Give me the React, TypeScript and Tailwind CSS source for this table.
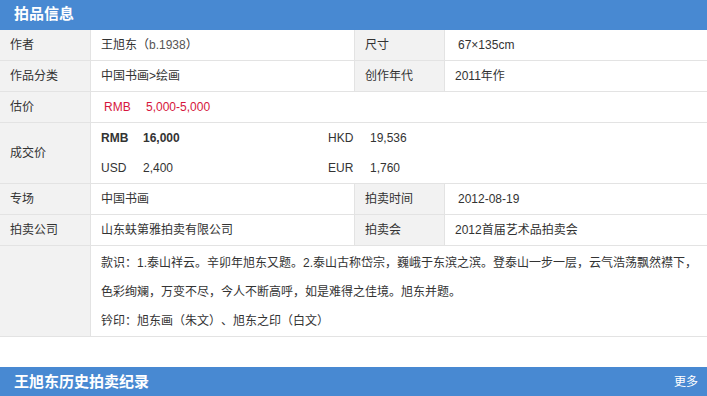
const font = { fontFamily: '"Liberation Sans", "Noto Sans CJK SC", sans-serif' };

function Label({ children, wide }: { children?: React.ReactNode; wide?: boolean }) {
  return (
    <div className={`${wide ? 'w-[91px]' : 'w-[90px]'} shrink-0 bg-[#f2f2f2] border-r border-[#e3e3e3] pl-[10px] flex items-center`}>
      {children}
    </div>
  );
}

function PairRow({ l1, v1, l2, v2 }: { l1: string; v1: React.ReactNode; l2: string; v2: React.ReactNode }) {
  return (
    <div className="flex h-[31px] border-b border-[#e3e3e3]">
      <Label wide>{l1}</Label>
      <div className="w-[264px] shrink-0 border-r border-[#e3e3e3] pl-[10px] flex items-center">{v1}</div>
      <Label>{l2}</Label>
      <div className="flex-1 pl-[10px] flex items-center">{v2}</div>
    </div>
  );
}

function Price({ cur, val, bold }: { cur: string; val: string; bold?: boolean }) {
  return (
    <div className={`flex items-center h-[30px] ${bold ? 'font-bold' : ''}`}>
      <span className="w-[42px]">{cur}</span>
      <span>{val}</span>
    </div>
  );
}

export default function App() {
  return (
    <div className="w-[707px] h-[396px] overflow-hidden bg-white text-[12px] text-[#333] [text-spacing-trim:space-all]" style={font}>
      {/* 拍品信息 */}
      <div className="h-[30px] bg-[#4889d2] flex items-center pl-[14px] pb-[2px] text-white text-[15px] font-bold">拍品信息</div>

      <PairRow
        l1="作者"
        v1={<span>王旭东（<span className="text-[#555]">b.1938</span>）</span>}
        l2="尺寸"
        v2={<span className="pl-[3px]">67×135cm</span>}
      />
      <PairRow l1="作品分类" v1="中国书画>绘画" l2="创作年代" v2="2011年作" />

      <div className="flex h-[31px] border-b border-[#e3e3e3]">
        <Label wide>估价</Label>
        <div className="flex-1 pl-[13px] flex items-center text-[#d6163c]">
          <span className="w-[42px]">RMB</span>
          <span>5,000-5,000</span>
        </div>
      </div>

      <div className="flex h-[61px] border-b border-[#e3e3e3]">
        <Label wide>成交价</Label>
        <div className="flex-1 pl-[10px] grid grid-cols-[227px_1fr]">
          <Price cur="RMB" val="16,000" bold />
          <Price cur="HKD" val="19,536" />
          <Price cur="USD" val="2,400" />
          <Price cur="EUR" val="1,760" />
        </div>
      </div>

      <PairRow l1="专场" v1="中国书画" l2="拍卖时间" v2={<span className="pl-[3px]">2012-08-19</span>} />
      <PairRow l1="拍卖公司" v1="山东蚨第雅拍卖有限公司" l2="拍卖会" v2="2012首届艺术品拍卖会" />

      <div className="flex h-[91px] border-b border-[#e3e3e3]">
        <Label wide />
        <div className="flex-1 pl-[10px] pt-[3px] leading-[29px] whitespace-nowrap">
          <div>款识：1.泰山祥云。辛卯年旭东又题。2.泰山古称岱宗，巍峨于东滨之滨。登泰山一步一层，云气浩荡飘然襟下，</div>
          <div>色彩绚斓，万变不尽，今人不断高呼，如是难得之佳境。旭东并题。</div>
          <div>钤印：旭东画（朱文）、旭东之印（白文）</div>
        </div>
      </div>

      <div className="h-[30px]" />

      {/* 历史拍卖纪录 */}
      <div className="h-[30px] bg-[#4889d2] flex items-center justify-between pl-[14px] pr-[9px] text-white">
        <span className="text-[15px] font-bold">王旭东历史拍卖纪录</span>
        <span className="text-[12px]">更多</span>
      </div>
    </div>
  );
}
